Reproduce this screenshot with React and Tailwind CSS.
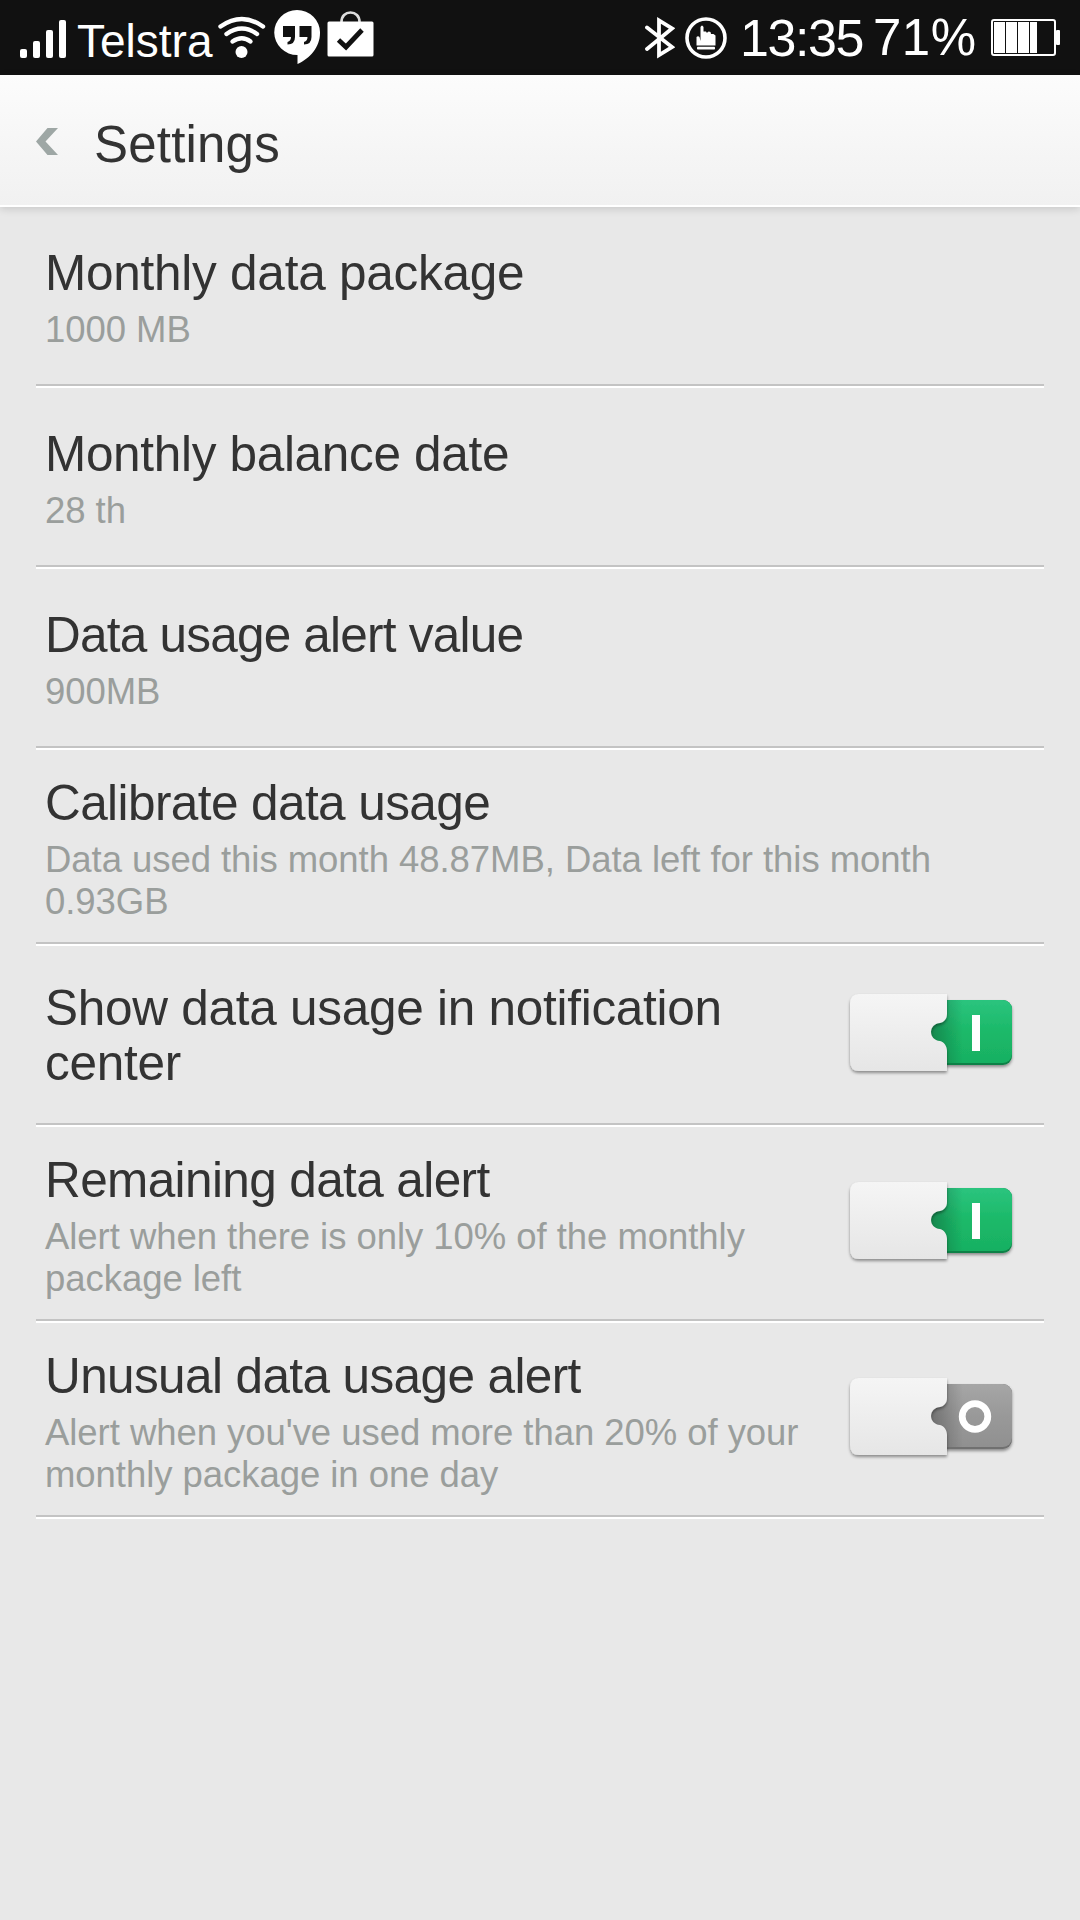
import clsx from 'clsx'

const items = [
    { title: 'Monthly data package', tracking: 'tracking-[-0.25px]', detail: ['1000 MB'] },
    { title: 'Monthly balance date', tracking: 'tracking-[-0.32px]', detail: ['28 th'] },
    { title: 'Data usage alert value', tracking: 'tracking-[-0.78px]', detail: ['900MB'] },
    { title: 'Calibrate data usage', tracking: 'tracking-[-0.58px]', detail: ['Data used this month 48.87MB, Data left for this month', '0.93GB'] },
    { title: 'Show data usage in notification center', tracking: 'tracking-[-0.27px]', toggle: 'on' },
    { title: 'Remaining data alert', tracking: 'tracking-[-0.61px]', detail: ['Alert when there is only 10% of the monthly', 'package left'], toggle: 'on' },
    { title: 'Unusual data usage alert', tracking: 'tracking-[-0.61px]', detail: ["Alert when you've used more than 20% of your", 'monthly package in one day'], toggle: 'off' },
]

function SignalIcon() {
    return (
        <svg width="46" height="38" viewBox="0 0 46 38" fill="#fff">
            <rect x="0" y="29" width="7" height="9" rx="2" />
            <rect x="13" y="21" width="7" height="17" rx="2" />
            <rect x="26" y="10" width="7" height="28" rx="2" />
            <rect x="39" y="0" width="7" height="38" rx="2" />
        </svg>
    )
}

function WifiIcon() {
    return (
        <svg width="48" height="42" viewBox="0 0 48 42" fill="none" stroke="#fff" strokeWidth="4.4" strokeLinecap="round">
            <path d="M2.5 10.5 Q24 -4.5 45 10.5" />
            <path d="M8.5 18 Q24 7 39 18" />
            <path d="M14.5 25.5 Q24 19 32.5 25.5" />
            <circle cx="23.5" cy="36" r="6" fill="#fff" stroke="none" />
        </svg>
    )
}

function HangoutsIcon() {
    return (
        <svg width="46" height="54" viewBox="0 0 46 54">
            <path fill="#fff" d="M23 0 A23 22.5 0 0 1 46 23 C46 37 36 48.5 23.5 54 V45 A23 22.5 0 0 1 23 0 Z" />
            <path fill="#111" d="M9 16 H21 V27 Q21 34.5 13.5 34.5 V32 Q17 31 17 27 H9 Z M25.5 16 H37.5 V27 Q37.5 34.5 30 34.5 V32 Q33.5 31 33.5 27 H25.5 Z" />
        </svg>
    )
}

function StoreIcon() {
    return (
        <svg width="47" height="46" viewBox="0 0 47 46" fill="none">
            <path d="M14.5 11 C14.5 5 18.5 1.5 23.5 1.5 S32.5 5 32.5 11" stroke="#ddd" strokeWidth="2.6" />
            <rect x="0.5" y="10.5" width="46" height="35" rx="1.5" fill="#fff" />
            <path d="M11.5 29 L19 36 L35 19" stroke="#111" strokeWidth="4.8" />
        </svg>
    )
}

function BluetoothIcon() {
    return (
        <svg width="30" height="42" viewBox="0 0 30 42" fill="none" stroke="#fff" strokeWidth="3.8">
            <path d="M2 10.5 L27 30 L14 38 V3.5 L27 11.5 L2 32" strokeLinecap="round" />
        </svg>
    )
}

function GestureIcon() {
    return (
        <svg width="42" height="42" viewBox="0 0 42 42">
            <circle cx="21" cy="21" r="19" fill="none" stroke="#fff" strokeWidth="3.6" />
            <path fill="#fff" d="M15.5 10 Q17 7 18.5 10 V14.5 H21 L22 16 Q23 13.5 25.5 15 L26 17 H28.5 L30.5 18.5 V28.5 H11.5 V20 Q13 18.5 14.5 20 L15.5 24 Z" />
            <rect x="12" y="29.8" width="18" height="2.8" rx="0.8" fill="#fff" />
        </svg>
    )
}

function BatteryIcon() {
    return (
        <svg width="70" height="38" viewBox="0 0 70 38">
            <rect x="1" y="1" width="63" height="35" rx="2" fill="none" stroke="#fff" strokeWidth="2" />
            <path fill="#fff" d="M3 3 H14 V34 H3 Z M15 3 H26 V34 H15 Z M27 3 H38 V34 H27 Z M39 3 H46 V34 H39 Z" />
            <rect x="65" y="11" width="4" height="15" rx="1" fill="#fff" />
        </svg>
    )
}

function StatusBar() {
    return (
        <div className="flex h-[75px] items-start justify-between bg-[#111] text-white">
            <div className="flex items-start pl-5">
                <div className="pt-5"><SignalIcon /></div>
                <span className="ml-[11px] w-[136px] whitespace-nowrap pt-[15px] text-[46px] leading-[52px]">Telstra</span>
                <div className="ml-[5px] pt-4"><WifiIcon /></div>
                <div className="ml-2 pt-[10px]"><HangoutsIcon /></div>
                <div className="ml-[7px] pt-[11px]"><StoreIcon /></div>
            </div>
            <div className="flex items-start pr-[19px]">
                <div className="pt-[17px]"><BluetoothIcon /></div>
                <div className="ml-[10px] pt-[17px]"><GestureIcon /></div>
                <span className="ml-[13px] w-[133px] whitespace-nowrap pt-2 text-[52px] leading-[60px] tracking-[-1.4px]">13:35</span>
                <span className="w-[118px] whitespace-nowrap pt-2 text-[51px] leading-[60px] tracking-[0.5px]">71%</span>
                <div className="pt-[19px]"><BatteryIcon /></div>
            </div>
        </div>
    )
}

function Header() {
    return (
        <div className="relative flex h-[132px] items-center border-b-2 border-white bg-linear-to-b from-[#fcfcfc] to-[#f1f1f1] pl-9 shadow-[0_2px_8px_rgba(0,0,0,0.14)]">
            <svg width="22" height="27" viewBox="0 0 22 27" fill="#9ea7a5" className="mt-[2px]">
                <path d="M11.5 0 H22 L9.5 13.5 L22 27 H11.5 L0 13.5 Z" />
            </svg>
            <h1 className="ml-9 pt-[9px] text-[51px] leading-[60px] tracking-[0.2px]">Settings</h1>
        </div>
    )
}

// id keeps the gradient names unique for each switch
function Toggle({ id, state }) {
    const on = state === 'on'
    return (
        <svg width="172" height="88" viewBox="0 0 172 88" className="block shrink-0">
            <defs>
                <linearGradient id={`track${id}`} x1="0" y1="0" x2="0" y2="1">
                    <stop offset="0" stopColor={on ? '#2bc47e' : '#a6a6a6'} />
                    <stop offset="0.5" stopColor={on ? '#1cb969' : '#999'} />
                    <stop offset="1" stopColor={on ? '#18b062' : '#909090'} />
                </linearGradient>
                <linearGradient id={`shade${id}`} x1="0" y1="0" x2="1" y2="0">
                    <stop offset="0" stopColor="#000" stopOpacity="0.28" />
                    <stop offset="1" stopColor="#000" stopOpacity="0" />
                </linearGradient>
                <linearGradient id={`knob${id}`} x1="0" y1="0" x2="0" y2="1">
                    <stop offset="0" stopColor="#f5f5f5" />
                    <stop offset="1" stopColor="#e6e6e6" />
                </linearGradient>
                <filter id={`shadow${id}`} x="-10%" y="-10%" width="120%" height="130%">
                    <feDropShadow dx="0" dy="2" stdDeviation="1.5" floodColor="#000" floodOpacity="0.4" />
                </filter>
            </defs>
            <g filter={`url(#shadow${id})`}>
                <rect x="60" y="10" width="107" height="65" rx="9" fill={on ? '#0d8146' : '#707070'} />
                <rect x="60" y="10" width="107" height="63" rx="9" fill={`url(#track${id})`} />
                <rect x="84" y="10" width="34" height="63" fill={`url(#shade${id})`} />
            </g>
            <g filter={`url(#shadow${id})`}>
                <path
                    d="M14 4 H102 V24 C102 29 99 32 95 33 C83 34 83 50 95 51 C99 52 102 56 102 61 V81 H14 Q5 81 5 71 V14 Q5 4 14 4 Z"
                    fill={`url(#knob${id})`}
                />
            </g>
            {on
                ? <rect x="127" y="25" width="8" height="36" fill="#fff" />
                : <circle cx="130" cy="42.5" r="12.8" fill="none" stroke="#fff" strokeWidth="6.8" />}
        </svg>
    )
}

function Row({ id, title, tracking, detail, toggle }) {
    const tall = detail && detail.length > 1
    return (
        <li className={clsx('mx-9 flex items-center justify-between border-b-2 border-white', tall ? 'h-[196px]' : 'h-[181px]')}>
            <div className="flex h-full w-full items-center justify-between border-b-2 border-[#c3c3c3] pl-[9px] pr-[27px]">
                <div className={clsx(toggle ? 'w-[770px]' : 'w-full', tall && 'pt-[5px]', detail && !tall && 'pt-1', !detail && 'pt-[1px]')}>
                    <h2 className={clsx('text-[49.5px]', detail ? 'leading-[56px]' : 'leading-[55px]', tracking)}>{title}</h2>
                    {detail && (
                        <p className="mt-2 whitespace-nowrap text-[36.5px] leading-[42px] tracking-[-0.05px] text-[#9a9e9c]">
                            {detail.map((line) => <span key={line} className="block">{line}</span>)}
                        </p>
                    )}
                </div>
                {toggle && <div className="pb-[2px]"><Toggle id={id} state={toggle} /></div>}
            </div>
        </li>
    )
}

export default function App() {
    return (
        <div className="min-h-[1920px] w-[1080px] overflow-hidden bg-[#e8e8e8] font-['Liberation_Sans',Arial,sans-serif] text-[#333]">
            <StatusBar />
            <Header />
            <ul>
                {items.map((item, i) => <Row key={item.title} id={i} {...item} />)}
            </ul>
        </div>
    )
}
